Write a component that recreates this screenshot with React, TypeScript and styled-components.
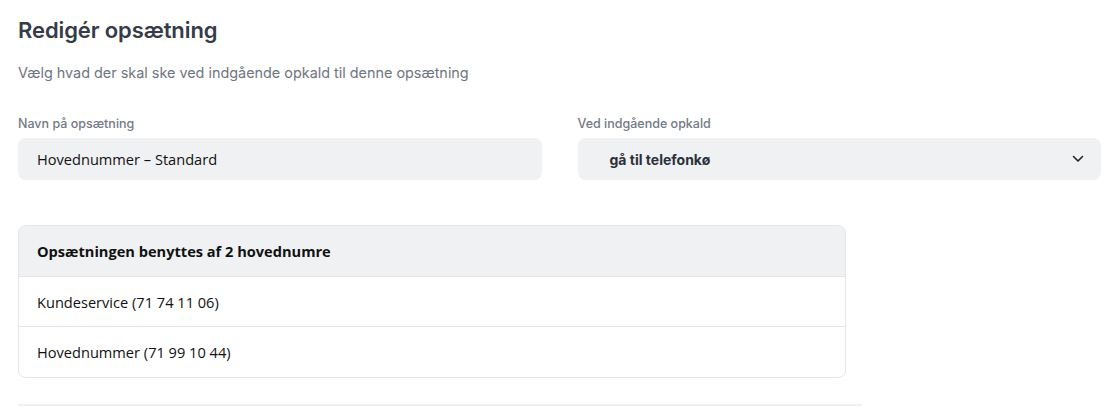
import React from "react";
import styled, { createGlobalStyle } from "styled-components";

const Global = createGlobalStyle`
  html, body { margin: 0; padding: 0; background: #fff; }
  body { font-family: "Open Sans", "Noto Sans", sans-serif; color: #111; }
  * { box-sizing: border-box; }
`;

const Page = styled.div`
  padding: 14px 9px 0 18px;
  display: flex;
  flex-direction: column;
`;

const Title = styled.h1`
  margin: 0;
  font-family: Inter, sans-serif;
  font-size: 22px;
  font-weight: 600;
  color: #353c47;
  line-height: 32px;
  letter-spacing: -0.1px;
`;

const Subtitle = styled.p`
  margin: 17px 0 0;
  font-family: Inter, sans-serif;
  font-size: 14.4px;
  color: #6e7580;
  line-height: 20px;
`;

const FieldRow = styled.div`
  display: grid;
  grid-template-columns: 1fr 1fr;
  column-gap: 36px;
  margin-top: 32px;
`;

const Field = styled.div`
  display: flex;
  flex-direction: column;
`;

const Label = styled.label`
  font-family: Inter, sans-serif;
  font-size: 12.5px;
  font-weight: 500;
  color: #737a85;
  line-height: 18px;
  margin-bottom: 5px;
`;

const TextInput = styled.div`
  height: 42px;
  background: #f0f1f3;
  border-radius: 8px;
  display: flex;
  align-items: center;
  padding: 0 18px 0 19px;
  font-family: "Open Sans", sans-serif;
  font-size: 14.6px;
  color: #111;
`;

const Select = styled.div`
  height: 42px;
  background: #f0f1f3;
  border-radius: 8px;
  display: flex;
  align-items: center;
  padding: 0 17px 0 17px;
  font-family: Inter, sans-serif;
  font-size: 14px;
  font-weight: 700;
  color: #2b303a;
`;

const SelectValue = styled.span`
  flex: 1;
  padding-left: 15px;
`;

const Card = styled.div`
  margin-top: 45px;
  width: 828px;
  border: 1px solid #e3e5e8;
  border-radius: 8px;
  overflow: hidden;
`;

const CardHeader = styled.div`
  height: 51px;
  background: #f0f1f3;
  display: flex;
  align-items: center;
  padding: 0 18px;
  font-size: 14.6px;
  font-weight: 700;
  color: #111;
  border-bottom: 1px solid #e3e5e8;
`;

const Row = styled.div<{ $last?: boolean }>`
  height: 50px;
  display: flex;
  align-items: center;
  padding: 0 18px;
  font-size: 14.6px;
  color: #111;
  border-bottom: ${(p) => (p.$last ? "none" : "1px solid #e3e5e8")};
`;

const Divider = styled.div`
  margin-top: 26px;
  width: 844px;
  height: 2px;
  background: #eef0f2;
`;

const Chevron = () => (
  <svg width="12" height="8" viewBox="0 0 12 8" fill="none">
    <path d="M1.5 1.5L6 6L10.5 1.5" stroke="#222" strokeWidth="1.6" strokeLinecap="round" strokeLinejoin="round" />
  </svg>
);

export default function App() {
  return (
    <>
      <Global />
      <Page>
        <Title>Redigér opsætning</Title>
        <Subtitle>Vælg hvad der skal ske ved indgående opkald til denne opsætning</Subtitle>
        <FieldRow>
          <Field>
            <Label>Navn på opsætning</Label>
            <TextInput>Hovednummer – Standard</TextInput>
          </Field>
          <Field>
            <Label>Ved indgående opkald</Label>
            <Select>
              <SelectValue>gå til telefonkø</SelectValue>
              <Chevron />
            </Select>
          </Field>
        </FieldRow>
        <Card>
          <CardHeader>Opsætningen benyttes af 2 hovednumre</CardHeader>
          <Row>Kundeservice (71 74 11 06)</Row>
          <Row $last>Hovednummer (71 99 10 44)</Row>
        </Card>
        <Divider />
      </Page>
    </>
  );
}
